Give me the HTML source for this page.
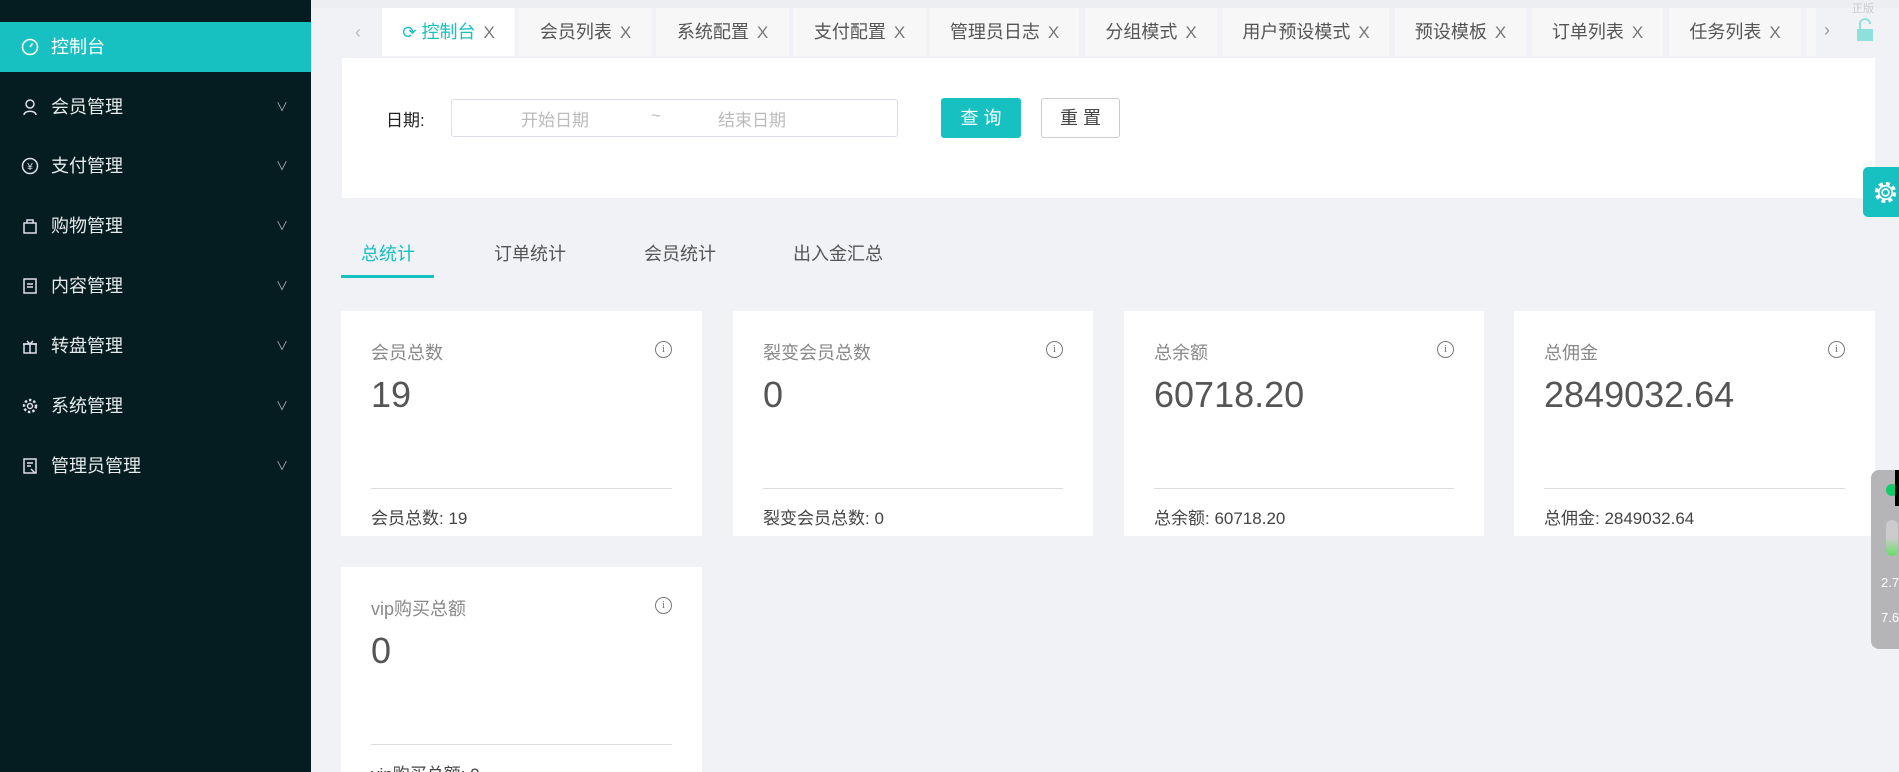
<!DOCTYPE html>
<html style="width:1899px;height:772px;overflow:hidden"><head><meta charset="utf-8"><style>
*{margin:0;padding:0;box-sizing:border-box}
body{width:1899px;height:772px;overflow:hidden;background:#f0f2f5;font-family:"Liberation Sans","Noto Sans CJK SC",sans-serif;position:relative;color:#333}
.side{position:absolute;left:0;top:0;width:311px;height:772px;background:#051d20}
.mi{position:absolute;left:0;width:311px;height:50px;color:#e6ecec;font-size:18px;line-height:50px;padding-left:51px}
.mi.act{background:#17c0c1;color:#fff}
.mi svg.ic{position:absolute;left:21px;top:16px}
.mi .ch{position:absolute;left:276px;top:0;color:#aab;font-size:12px}
.tab{position:absolute;top:8px;height:48px;background:#f7f7f7;font-size:18px;color:#555;line-height:48px;text-align:center}
.tab .x{color:#777;font-size:17px;margin-left:8px}
.card{position:absolute;background:#fff;overflow:hidden}
.ct{position:absolute;left:30px;top:28px;font-size:18px;color:#888}
.cv{position:absolute;left:30px;top:63px;font-size:36px;color:#555}
.cl{position:absolute;left:30px;right:30px;top:177px;border-top:1px solid #ddd}
.cf{position:absolute;left:30px;top:193px;font-size:17px;color:#444}
.ci{position:absolute;right:30px;top:30px;width:17px;height:17px;border:1.5px solid #777;border-radius:50%;font-size:11px;line-height:14px;text-align:center;color:#777;font-family:"Liberation Serif",serif}
.st{position:absolute;top:240px;font-size:18px;color:#555}
</style></head><body>
<div class="side">
 <div class="mi act" style="top:22px"><svg class="ic" width="18" height="18" viewBox="0 0 18 18"><circle cx="9" cy="9" r="7.5" fill="none" stroke="#fff" stroke-width="1.6"/><path d="M9 9L11.5 5.5" stroke="#fff" stroke-width="1.6"/></svg>控制台</div>
 <div class="mi" style="top:82px"><svg class="ic" width="18" height="18" viewBox="0 0 18 18"><circle cx="9" cy="6" r="4" fill="none" stroke="#dde" stroke-width="1.5"/><path d="M3 17c0-5 12-5 12 0" fill="none" stroke="#dde" stroke-width="1.5"/></svg>会员管理<span class="ch">∨</span></div>
 <div class="mi" style="top:141px"><svg class="ic" width="18" height="18" viewBox="0 0 18 18"><circle cx="9" cy="9" r="7.5" fill="none" stroke="#dde" stroke-width="1.5"/><text x="9" y="13" font-size="10" fill="#dde" text-anchor="middle">¥</text></svg>支付管理<span class="ch">∨</span></div>
 <div class="mi" style="top:201px"><svg class="ic" width="18" height="18" viewBox="0 0 18 18"><rect x="3" y="6" width="12" height="10" fill="none" stroke="#dde" stroke-width="1.5"/><path d="M6 6V3h6v3" fill="none" stroke="#dde" stroke-width="1.5"/></svg>购物管理<span class="ch">∨</span></div>
 <div class="mi" style="top:261px"><svg class="ic" width="18" height="18" viewBox="0 0 18 18"><rect x="3" y="2" width="12" height="14" fill="none" stroke="#dde" stroke-width="1.5"/><path d="M6 7h6M6 10h6" stroke="#dde" stroke-width="1.5"/></svg>内容管理<span class="ch">∨</span></div>
 <div class="mi" style="top:321px"><svg class="ic" width="18" height="18" viewBox="0 0 18 18"><rect x="3" y="7" width="12" height="9" fill="none" stroke="#dde" stroke-width="1.5"/><path d="M2 7h14M9 7v9M6 4l3 3 3-3" fill="none" stroke="#dde" stroke-width="1.5"/></svg>转盘管理<span class="ch">∨</span></div>
 <div class="mi" style="top:381px"><svg class="ic" width="18" height="18" viewBox="0 0 18 18"><circle cx="9" cy="9" r="6" fill="none" stroke="#dde" stroke-width="2.5" stroke-dasharray="2.5 2"/><circle cx="9" cy="9" r="2.5" fill="none" stroke="#dde" stroke-width="1.5"/></svg>系统管理<span class="ch">∨</span></div>
 <div class="mi" style="top:441px"><svg class="ic" width="18" height="18" viewBox="0 0 18 18"><rect x="3" y="2" width="12" height="14" fill="none" stroke="#dde" stroke-width="1.5"/><path d="M6 6h6M6 9h4M10 12l4 4" stroke="#dde" stroke-width="1.5"/></svg>管理员管理<span class="ch">∨</span></div>
</div>
<div style="position:absolute;left:311px;top:0;width:1588px;height:8px;background:#eceef1"></div>
<div style="position:absolute;left:355px;top:22px;color:#bbb;font-size:18px">‹</div>
<div class="tab" style="left:382px;width:133px;background:#fff;color:#17c0c1"><span style="font-size:17px">⟳</span> 控制台<span class="x">X</span></div>
<div class="tab" style="left:519px;width:133px">会员列表<span class="x">X</span></div>
<div class="tab" style="left:656px;width:133px">系统配置<span class="x">X</span></div>
<div class="tab" style="left:793px;width:133px">支付配置<span class="x">X</span></div>
<div class="tab" style="left:930px;width:149px">管理员日志<span class="x">X</span></div>
<div class="tab" style="left:1085px;width:132px">分组模式<span class="x">X</span></div>
<div class="tab" style="left:1223px;width:166px">用户预设模式<span class="x">X</span></div>
<div class="tab" style="left:1395px;width:131px">预设模板<span class="x">X</span></div>
<div class="tab" style="left:1532px;width:131px">订单列表<span class="x">X</span></div>
<div class="tab" style="left:1669px;width:132px">任务列表<span class="x">X</span></div>
<div class="tab" style="left:1806px;width:10px"></div>
<div style="position:absolute;left:1824px;top:20px;color:#999;font-size:18px">›</div>
<svg style="position:absolute;left:1855px;top:18px" width="20" height="24" viewBox="0 0 20 24"><path d="M5 11V6a5 5 0 0 1 10 0" fill="none" stroke="#8ee0dd" stroke-width="2"/><rect x="2" y="11" width="16" height="12" fill="#8ee0dd"/></svg>
<div style="position:absolute;left:1852px;top:0;font-size:11px;color:#ccc">正版</div>
<div class="card" style="left:342px;top:58px;width:1533px;height:140px"></div>
<div style="position:absolute;left:386px;top:106px;font-size:17px;color:#222">日期:</div>
<div style="position:absolute;left:451px;top:99px;width:447px;height:38px;border:1px solid #dcdfe6;border-radius:3px;background:#fff;font-size:17px;color:#bbb">
 <span style="position:absolute;left:69px;top:6px">开始日期</span><span style="position:absolute;left:199px;top:6px">~</span><span style="position:absolute;left:266px;top:6px">结束日期</span></div>
<div style="position:absolute;left:941px;top:98px;width:80px;height:40px;background:#17c0c1;border-radius:3px;color:#fff;font-size:18px;text-align:center;line-height:40px">查 询</div>
<div style="position:absolute;left:1041px;top:98px;width:79px;height:40px;border:1px solid #ccc;border-radius:3px;background:#fff;color:#444;font-size:18px;text-align:center;line-height:38px">重 置</div>
<div style="position:absolute;left:1863px;top:167px;width:40px;height:50px;background:#17c0c1;border-radius:5px"></div>
<svg style="position:absolute;left:1872px;top:179px" width="27" height="27" viewBox="0 0 24 24"><circle cx="12" cy="12" r="8" fill="none" stroke="#fff" stroke-width="3" stroke-dasharray="3.5 2.8"/><circle cx="12" cy="12" r="6" fill="none" stroke="#fff" stroke-width="1.5"/><circle cx="12" cy="12" r="3" fill="none" stroke="#fff" stroke-width="1.5"/></svg>
<div class="st" style="left:361px;color:#17c0c1">总统计</div>
<div style="position:absolute;left:341px;top:275px;width:93px;height:3px;background:#17c0c1"></div>
<div class="st" style="left:494px">订单统计</div>
<div class="st" style="left:644px">会员统计</div>
<div class="st" style="left:793px">出入金汇总</div>
<div class="card" style="left:341px;top:311px;width:361px;height:225px"><div class="ct">会员总数</div><div class="ci">i</div><div class="cv">19</div><div class="cl"></div><div class="cf">会员总数: 19</div></div>
<div class="card" style="left:733px;top:311px;width:360px;height:225px"><div class="ct">裂变会员总数</div><div class="ci">i</div><div class="cv">0</div><div class="cl"></div><div class="cf">裂变会员总数: 0</div></div>
<div class="card" style="left:1124px;top:311px;width:360px;height:225px"><div class="ct">总余额</div><div class="ci">i</div><div class="cv">60718.20</div><div class="cl"></div><div class="cf">总余额: 60718.20</div></div>
<div class="card" style="left:1514px;top:311px;width:361px;height:225px"><div class="ct">总佣金</div><div class="ci">i</div><div class="cv">2849032.64</div><div class="cl"></div><div class="cf">总佣金: 2849032.64</div></div>
<div class="card" style="left:341px;top:567px;width:361px;height:205px"><div class="ct">vip购买总额</div><div class="ci">i</div><div class="cv">0</div><div class="cl"></div><div class="cf">vip购买总额: 0</div></div>
<div style="position:absolute;left:1871px;top:470px;width:40px;height:179px;background:#b5b5b8;border-radius:8px">
 <div style="position:absolute;left:15px;top:14px;width:12px;height:12px;border-radius:50%;background:#1c6"></div>
 <div style="position:absolute;left:24px;top:0;width:6px;height:36px;background:#000"></div>
 <div style="position:absolute;left:15px;top:50px;width:12px;height:36px;border-radius:6px;background:linear-gradient(#ccc,#ccc 50%,#6d6)"></div>
 <div style="position:absolute;left:10px;top:105px;color:#fff;font-size:13px">2.7</div>
 <div style="position:absolute;left:10px;top:140px;color:#fff;font-size:13px">7.6</div>
</div>
</body></html>
